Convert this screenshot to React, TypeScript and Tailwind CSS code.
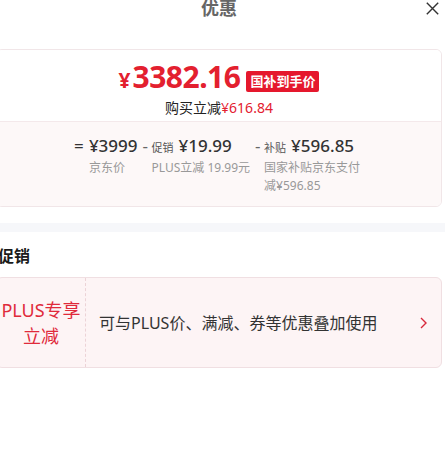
import React from "react";

const font = { fontFamily: '"Noto Sans", "Noto Sans CJK SC", sans-serif' };

function Item({ sign, tag, price, labels, labelW }: { sign: string; tag?: string; price: string; labels: string[]; labelW?: string }) {
  return (
    <div className="flex items-start">
      <span className={`h-[27px] text-[17px] leading-[27px] ${sign === "=" ? "w-[15px] text-[#333]" : "w-[9px] text-[#666]"}`}>{sign}</span>
      <div className={`flex flex-col ${labelW ?? ""}`}>
        <div className="h-[27px] flex items-baseline leading-[27px] whitespace-nowrap">
          {tag && <span className="text-[11px] text-[#555] mr-[5px]">{tag}</span>}
          <span className="text-[17px] font-medium text-[#333]">{price}</span>
        </div>
        {labels.map((l) => (
          <div key={l} className="h-[18px] text-[12px] leading-[18px] text-[#999] whitespace-nowrap">{l}</div>
        ))}
      </div>
    </div>
  );
}

export default function App() {
  return (
    <div className="w-[445px] h-[454px] bg-white overflow-hidden relative" style={font}>
      <div className="-ml-[8px] w-[454px]">
        <div className="relative h-[50px]">
          <div className="h-[18px] text-center text-[18px] font-bold text-[#666] leading-[18px] -mt-[1px]">优惠</div>
          <svg className="absolute left-[434px] top-[3px]" width="13" height="13" viewBox="0 0 13 13">
            <path d="M0.8 0.8 L12.2 12.2 M12.2 0.8 L0.8 12.2" stroke="#333" strokeWidth="1.4" fill="none" />
          </svg>
        </div>
        <div className="mx-[4px] border border-[#f1e6e8] rounded-[6px] overflow-hidden">
          <div className="bg-white pt-[9px] pb-[3px] border-b border-[#f4e9eb]">
            <div className="h-[36px] flex items-center justify-center">
              <div className="h-[36px] flex items-baseline text-[#e3202f] font-bold leading-[36px]">
                <span className="text-[21px] mr-[2px]">¥</span>
                <span className="text-[30px] tracking-[-0.5px]">3382.16</span>
              </div>
              <span className="ml-[6px] mt-[8px] h-[21px] px-[4px] rounded-[2px] bg-[#e5182d] text-white text-[13px] font-bold leading-[21px]">国补到手价</span>
            </div>
            <div className="h-[20px] mt-[3px] text-center text-[14px] leading-[20px]">
              <span className="text-[#222]">购买立减</span>
              <span className="text-[#e3202f]">¥616.84</span>
            </div>
          </div>
          <div className="bg-[#fdf8f8] pt-[10px] pb-[11px] flex justify-center items-start gap-[5px] pr-[2px]">
            <Item sign="=" price="¥3999" labels={["京东价"]} />
            <Item sign="-" tag="促销" price="¥19.99" labels={["PLUS立减 19.99元"]} />
            <Item sign="-" tag="补贴" price="¥596.85" labels={["国家补贴京东支付", "减¥596.85"]} labelW="w-[98px]" />
          </div>
        </div>
        <div className="mt-[16px] h-[9px] bg-[#f6f7fa]" />
        <div className="ml-[6px] mt-[14px] h-[20px] text-[16px] font-bold leading-[20px] text-[#1a1a1a]">促销</div>
        <div className="mx-[4px] mt-[11px] h-[91px] border border-[#f0dfe2] bg-[#fdf4f5] rounded-[6px] flex items-center">
          <div className="w-[89px] h-full border-r border-dashed border-[#ecd3d7] flex flex-col items-center justify-center text-[18px] leading-[26px] text-[#e02a3b]">
            <span className="h-[26px]">PLUS专享</span>
            <span className="h-[26px]">立减</span>
          </div>
          <div className="flex-1 h-[22px] pl-[13px] text-[16px] leading-[22px] text-[#333]">可与PLUS价、满减、券等优惠叠加使用</div>
          <svg className="mr-[14px]" width="7" height="12" viewBox="0 0 7 12">
            <path d="M1 1 L6 6 L1 11" stroke="#d8283b" strokeWidth="1.4" fill="none" />
          </svg>
        </div>
      </div>
    </div>
  );
}
